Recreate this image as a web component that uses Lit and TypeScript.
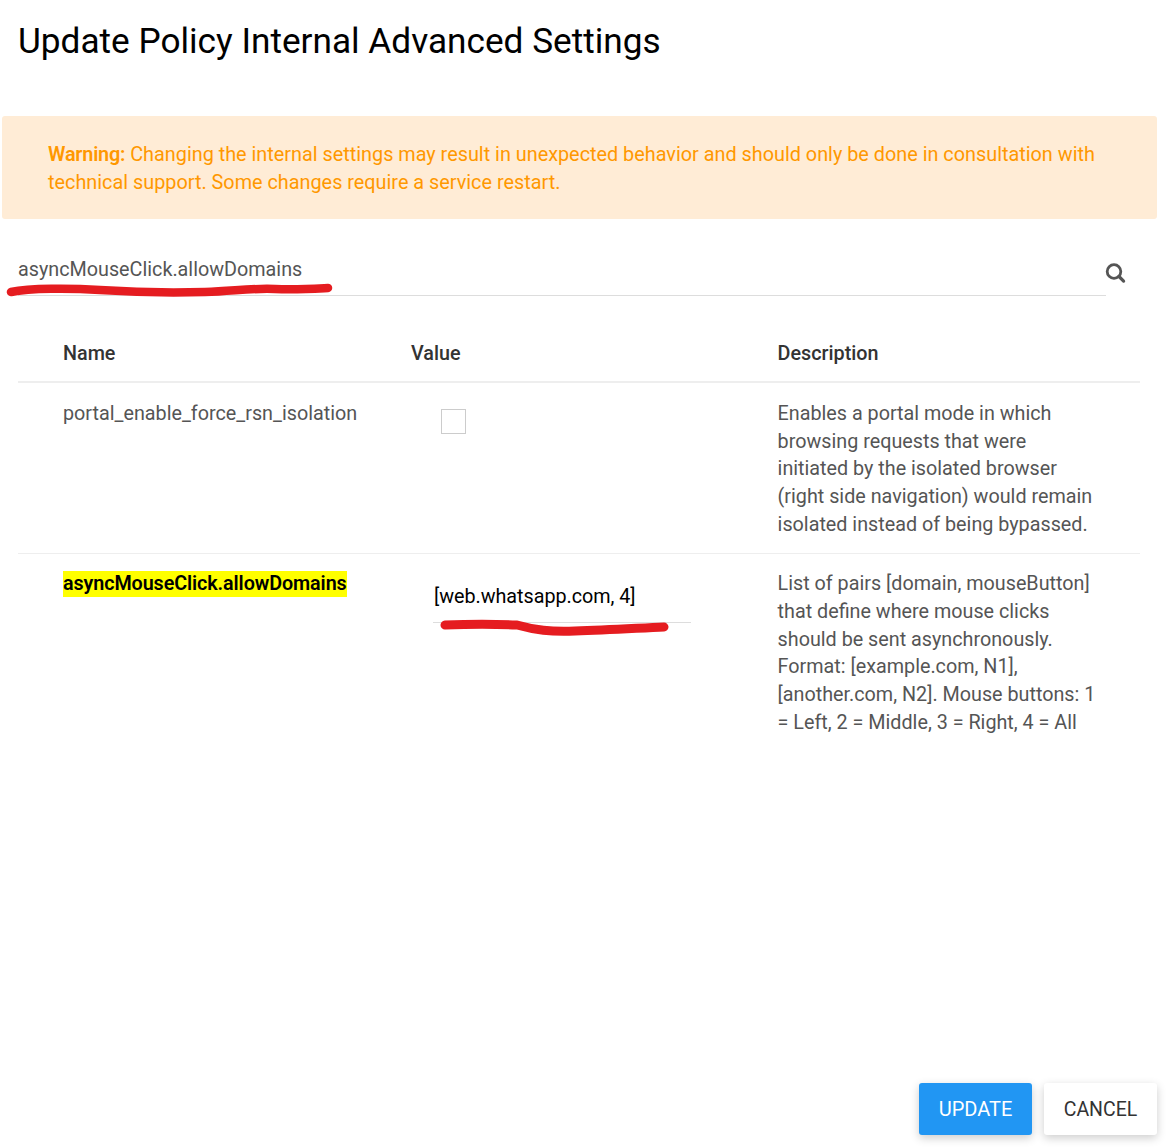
import { LitElement, html, css } from "lit";
import { customElement } from "lit/decorators.js";

@customElement("app-root")
export class AppRoot extends LitElement {
  static styles = css`
    :host {
      display: block;
      width: 1168px;
      height: 1147px;
      background: #fff;
      font-family: Roboto, "Liberation Sans", sans-serif;
      font-size: 19.75px;
      color: #555;
      overflow: hidden;
    }
    .page {
      position: relative;
      height: 1147px;
      display: flex;
      flex-direction: column;
      box-sizing: border-box;
      padding: 16px 11px 12px 2px;
    }
    h1 {
      margin: 0 0 0 16px;
      font-size: 35.2px;
      line-height: 50px;
      font-weight: 400;
      color: #000;
      height: 100px;
    }
    .warn {
      box-sizing: border-box;
      height: 103px;
      padding: 25px 46px 0;
      background: #ffecd6;
      border-radius: 3px;
      color: #ff9800;
      line-height: 28px;
      font-size: 19.83px;
    }
    .warn b { font-weight: 600; letter-spacing: -0.2px; }
    .search {
      display: flex;
      margin: 30px 0 0 16px;
      align-items: flex-start;
    }
    .search-input {
      width: 1088px;
      height: 47px;
      box-sizing: border-box;
      border-bottom: 1px solid #ddd;
      line-height: 42px;
      color: #555;
    }
    .search svg { margin: 13px 0 0 -2px; display: block; }
    table {
      margin-left: 16px;
      margin-top: 29px;
      width: 1122px;
      border-collapse: collapse;
      table-layout: fixed;
    }
    col.c1 { width: 393px; }
    col.c2 { width: 366.6px; }
    th {
      height: 56px;
      padding: 0 0 0 45px;
      text-align: left;
      font-weight: 500;
      color: #333;
      border-bottom: 2px solid #eee;
    }
    th.v, td.v { padding-left: 0; }
    th.d, td.d { padding-left: 0; padding-right: 40px; }
    td {
      vertical-align: top;
      padding: 17px 0 14px 45px;
      line-height: 27.7px;
      border-bottom: 1px solid #eee;
    }
    tr:last-child td { border-bottom: none; padding-top: 16.4px; }
    tr:last-child td.d { padding-top: 16.8px; }
    .check {
      display: block;
      width: 25px;
      height: 25px;
      box-sizing: border-box;
      border: 1px solid #ccc;
      margin: 9px 0 0 30px;
    }
    mark {
      background: #ff0;
      color: #000;
      font-weight: 600;
      line-height: 26px;
      display: inline-block;
      letter-spacing: -0.1px;
    }
    .value-input {
      margin: 13px 0 0 22px;
      padding-left: 1px;
      width: 258px;
      height: 40px;
      box-sizing: border-box;
      border-bottom: 1px solid #ddd;
      line-height: 27px;
      color: #000;
      letter-spacing: -0.03px;
    }
    .footer {
      margin-top: auto;
      display: flex;
      justify-content: flex-end;
      gap: 12px;
    }
    button {
      height: 52px;
      border: none;
      border-radius: 3px;
      font: 400 19.75px Roboto, "Liberation Sans", sans-serif;
      box-shadow: 0 3px 10px rgba(0, 0, 0, 0.2);
      padding: 0;
    }
    .primary { width: 113px; background: #2196f3; color: #fff; font-size: 20px; }
    .secondary { width: 113px; background: #fff; color: #333; font-size: 19.5px; }
    .scribble { position: absolute; left: 0; top: 0; pointer-events: none; }
  `;

  render() {
    return html`
      <div class="page">
        <h1>Update Policy Internal Advanced Settings</h1>
        <div class="warn">
          <b>Warning:</b> Changing the internal settings may result in unexpected behavior and should only be done in consultation with technical support. Some changes require a service restart.
        </div>
        <div class="search">
          <div class="search-input">asyncMouseClick.allowDomains</div>
          <svg width="22" height="22" viewBox="0 0 22 22" fill="none" stroke="#555">
            <circle cx="10" cy="9.5" r="6.8" stroke-width="2.8"></circle>
            <path d="M15 14.5l4.6 4.6" stroke-width="3.2" stroke-linecap="round"></path>
          </svg>
        </div>
        <table>
          <colgroup><col class="c1" /><col class="c2" /><col /></colgroup>
          <thead>
            <tr><th>Name</th><th class="v">Value</th><th class="d">Description</th></tr>
          </thead>
          <tbody>
            <tr>
              <td>portal_enable_force_rsn_isolation</td>
              <td class="v"><span class="check"></span></td>
              <td class="d">Enables a portal mode in which browsing requests that were initiated by the isolated browser (right side navigation) would remain isolated instead of being bypassed.</td>
            </tr>
            <tr>
              <td><mark>asyncMouseClick.allowDomains</mark></td>
              <td class="v"><div class="value-input">[web.whatsapp.com, 4]</div></td>
              <td class="d">List of pairs [domain, mouseButton] that define where mouse clicks should be sent asynchronously. Format: [example.com, N1], [another.com, N2]. Mouse buttons: 1 = Left, 2 = Middle, 3 = Right, 4 = All</td>
            </tr>
          </tbody>
        </table>
        <div class="footer">
          <button class="primary">UPDATE</button>
          <button class="secondary">CANCEL</button>
        </div>
        <svg class="scribble" width="1168" height="1147" fill="none" stroke="#e51c20" stroke-linecap="round" stroke-linejoin="round">
          <path stroke-width="8.5" d="M11 292C30 288 70 288 100 290C130 292 170 293 205 292C235 291 250 288 275 289C295 290 310 289 328 288"></path>
          <path stroke-width="9" d="M445 625C470 624 495 624 517 625C535 630 550 632 575 631C610 630 640 628 664 627"></path>
        </svg>
      </div>
    `;
  }
}
